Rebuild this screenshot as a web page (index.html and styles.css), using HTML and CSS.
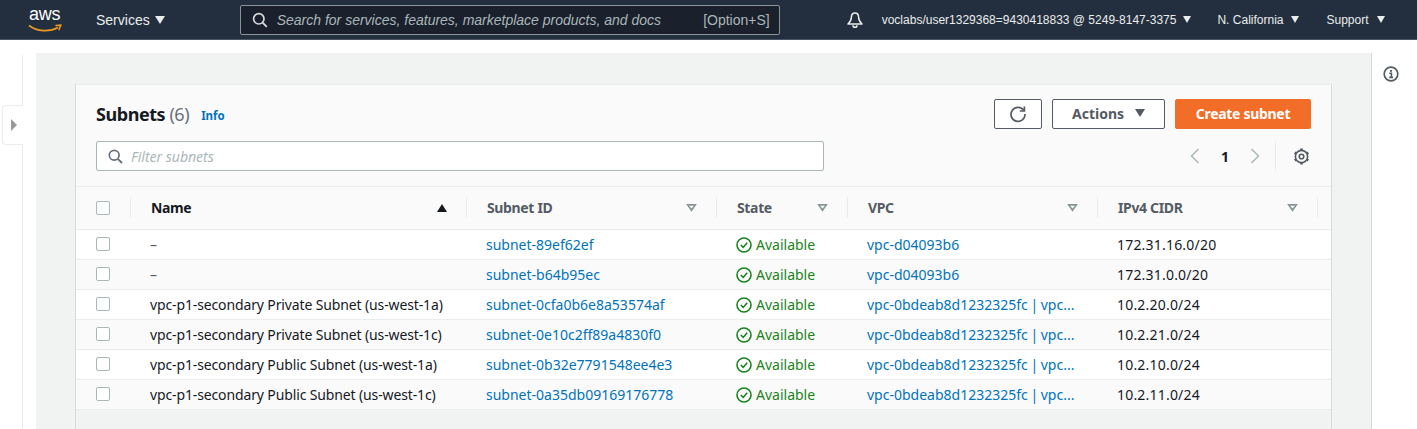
FILE: index.html
```html
<!DOCTYPE html>
<html lang="en">
<head>
    <meta charset="UTF-8">
    <title>Subnets | VPC Management Console</title>
    <link rel="stylesheet" href="styles.css">
</head>
<body>

    <!-- Top navigation -->
    <nav class="topnav">
        <a class="logo">
            <span class="logo-text">aws</span>
            <svg class="logo-smile" width="34" height="9" viewBox="0 0 34 9">
                <path d="M1 1.5C9 7.5 21 8.5 30 3.5" fill="none" stroke="#ec9a1f" stroke-width="1.7"/>
                <path d="M27.5 1.6L32.8 1.2L30.8 6.2" fill="none" stroke="#ec9a1f" stroke-width="1.5"/>
            </svg>
        </a>
        <span class="nav-item services">Services <i class="caret"></i></span>
        <div class="nav-search">
            <svg width="16" height="16" viewBox="0 0 16 16" class="nav-search-icon">
                <circle cx="6.8" cy="6.8" r="5.2" fill="none" stroke="#d5dbdb" stroke-width="1.7"/>
                <path d="M10.6 10.6L14.8 14.8" stroke="#d5dbdb" stroke-width="1.9"/>
            </svg>
            <span class="nav-search-text">Search for services, features, marketplace products, and docs</span>
            <span class="nav-search-key">[Option+S]</span>
        </div>
        <svg class="bell" width="18" height="18" viewBox="0 0 18 18">
            <path d="M9 2C6.4 2 5.4 4 5.4 6.3C5.4 9 4.2 11 2 13H16C13.8 11 12.6 9 12.6 6.3C12.6 4 11.6 2 9 2Z" fill="none" stroke="#eaeded" stroke-width="1.5" stroke-linejoin="round"/>
            <path d="M7 14.2C7 17 11 17 11 14.2" fill="none" stroke="#eaeded" stroke-width="1.5"/>
        </svg>
        <span class="nav-item account">voclabs/user1329368=9430418833 @ 5249-8147-3375 <i class="caret small"></i></span>
        <span class="nav-item region">N. California <i class="caret small"></i></span>
        <span class="nav-item support">Support <i class="caret small"></i></span>
    </nav>

    <div class="layout">
        <!-- Left collapsed navigation -->
        <aside class="side-left">
            <div class="side-tab"><i class="side-arrow"></i></div>
        </aside>

        <main class="content">
            <section class="card">
                <header class="card-head">
                    <div class="head-row">
                        <h1>Subnets <span class="count">(6)</span></h1>
                        <a class="info">Info</a>
                        <div class="actions">
                            <button class="btn btn-icon">
                                <svg width="18" height="18" viewBox="0 0 18 18">
                                    <path d="M14.6 5.2A7 7 0 1 0 16 9" fill="none" stroke="#545b64" stroke-width="1.7"/>
                                    <path d="M15.4 1.4V6H10.8" fill="none" stroke="#545b64" stroke-width="1.7"/>
                                </svg>
                            </button>
                            <button class="btn btn-actions"><span>Actions</span> <i class="caret dark"></i></button>
                            <button class="btn btn-primary"><span>Create subnet</span></button>
                        </div>
                    </div>
                    <div class="filter-row">
                        <div class="filter">
                            <svg width="15" height="15" viewBox="0 0 15 15">
                                <circle cx="6.2" cy="6.2" r="4.9" fill="none" stroke="#687078" stroke-width="1.7"/>
                                <path d="M9.8 9.8L14 14" stroke="#687078" stroke-width="1.9"/>
                            </svg>
                            <span>Filter subnets</span>
                        </div>
                        <div class="pager">
                            <svg width="10" height="16" viewBox="0 0 10 16"><path d="M8.5 1L1.5 8L8.5 15" fill="none" stroke="#aab7b8" stroke-width="1.5"/></svg>
                            <span class="page-num">1</span>
                            <svg width="10" height="16" viewBox="0 0 10 16"><path d="M1.5 1L8.5 8L1.5 15" fill="none" stroke="#aab7b8" stroke-width="1.5"/></svg>
                            <span class="pager-sep"></span>
                            <svg class="gear" width="17" height="17" viewBox="0 0 17 17">
                                <circle cx="8.5" cy="8.5" r="6.1" fill="none" stroke="#545b64" stroke-width="1.6"/>
                                <circle cx="8.5" cy="8.5" r="2.3" fill="none" stroke="#545b64" stroke-width="1.6"/>
                                <path d="M8.5 0.6V2.4M8.5 14.6V16.4M1.7 4.6L3.2 5.5M13.8 11.5L15.3 12.4M1.7 12.4L3.2 11.5M13.8 5.5L15.3 4.6" stroke="#545b64" stroke-width="2.6"/>
                            </svg>
                        </div>
                    </div>
                </header>

                <table class="subnets">
                    <thead>
                        <tr>
                            <th class="col-check"><div class="th-check"><span class="checkbox"></span></div></th>
                            <th class="col-name"><div class="th-in sorted"><span>Name</span> <i class="sort-up"></i></div></th>
                            <th class="col-id"><div class="th-in"><span>Subnet ID</span> <i class="sort-down"></i></div></th>
                            <th class="col-state"><div class="th-in"><span>State</span> <i class="sort-down"></i></div></th>
                            <th class="col-vpc"><div class="th-in"><span>VPC</span> <i class="sort-down"></i></div></th>
                            <th class="col-cidr"><div class="th-in last"><span>IPv4 CIDR</span> <i class="sort-down"></i></div></th>
                            <th class="col-rest"></th>
                        </tr>
                    </thead>
                    <tbody id="rows">
                        <tr>
                            <td><span class="checkbox"></span></td>
                            <td class="dash">–</td>
                            <td><a>subnet-89ef62ef</a></td>
                            <td class="ok"><svg width="16" height="16" viewBox="0 0 16 16"><circle cx="8" cy="8" r="7" fill="none" stroke="#1a8320" stroke-width="1.6"/><path d="M4.8 8L7.2 10.4L11.2 5.8" fill="none" stroke="#1a8320" stroke-width="1.6"/></svg>Available</td>
                            <td><a>vpc-d04093b6</a></td>
                            <td class="cidr">172.31.16.0/20</td>
                            <td></td>
                        </tr>
                        <tr>
                            <td><span class="checkbox"></span></td>
                            <td class="dash">–</td>
                            <td><a>subnet-b64b95ec</a></td>
                            <td class="ok"><svg width="16" height="16" viewBox="0 0 16 16"><circle cx="8" cy="8" r="7" fill="none" stroke="#1a8320" stroke-width="1.6"/><path d="M4.8 8L7.2 10.4L11.2 5.8" fill="none" stroke="#1a8320" stroke-width="1.6"/></svg>Available</td>
                            <td><a>vpc-d04093b6</a></td>
                            <td class="cidr">172.31.0.0/20</td>
                            <td></td>
                        </tr>
                        <tr>
                            <td><span class="checkbox"></span></td>
                            <td class="name">vpc-p1-secondary Private Subnet (us-west-1a)</td>
                            <td><a>subnet-0cfa0b6e8a53574af</a></td>
                            <td class="ok"><svg width="16" height="16" viewBox="0 0 16 16"><circle cx="8" cy="8" r="7" fill="none" stroke="#1a8320" stroke-width="1.6"/><path d="M4.8 8L7.2 10.4L11.2 5.8" fill="none" stroke="#1a8320" stroke-width="1.6"/></svg>Available</td>
                            <td class="vpc"><a>vpc-0bdeab8d1232325fc | vpc...</a></td>
                            <td class="cidr">10.2.20.0/24</td>
                            <td></td>
                        </tr>
                        <tr>
                            <td><span class="checkbox"></span></td>
                            <td class="name">vpc-p1-secondary Private Subnet (us-west-1c)</td>
                            <td><a>subnet-0e10c2ff89a4830f0</a></td>
                            <td class="ok"><svg width="16" height="16" viewBox="0 0 16 16"><circle cx="8" cy="8" r="7" fill="none" stroke="#1a8320" stroke-width="1.6"/><path d="M4.8 8L7.2 10.4L11.2 5.8" fill="none" stroke="#1a8320" stroke-width="1.6"/></svg>Available</td>
                            <td class="vpc"><a>vpc-0bdeab8d1232325fc | vpc...</a></td>
                            <td class="cidr">10.2.21.0/24</td>
                            <td></td>
                        </tr>
                        <tr>
                            <td><span class="checkbox"></span></td>
                            <td class="name">vpc-p1-secondary Public Subnet (us-west-1a)</td>
                            <td><a>subnet-0b32e7791548ee4e3</a></td>
                            <td class="ok"><svg width="16" height="16" viewBox="0 0 16 16"><circle cx="8" cy="8" r="7" fill="none" stroke="#1a8320" stroke-width="1.6"/><path d="M4.8 8L7.2 10.4L11.2 5.8" fill="none" stroke="#1a8320" stroke-width="1.6"/></svg>Available</td>
                            <td class="vpc"><a>vpc-0bdeab8d1232325fc | vpc...</a></td>
                            <td class="cidr">10.2.10.0/24</td>
                            <td></td>
                        </tr>
                        <tr>
                            <td><span class="checkbox"></span></td>
                            <td class="name">vpc-p1-secondary Public Subnet (us-west-1c)</td>
                            <td><a>subnet-0a35db09169176778</a></td>
                            <td class="ok"><svg width="16" height="16" viewBox="0 0 16 16"><circle cx="8" cy="8" r="7" fill="none" stroke="#1a8320" stroke-width="1.6"/><path d="M4.8 8L7.2 10.4L11.2 5.8" fill="none" stroke="#1a8320" stroke-width="1.6"/></svg>Available</td>
                            <td class="vpc"><a>vpc-0bdeab8d1232325fc | vpc...</a></td>
                            <td class="cidr">10.2.11.0/24</td>
                            <td></td>
                        </tr>
                    </tbody>
                </table>
            </section>
        </main>

        <!-- Right help rail -->
        <aside class="side-right">
            <svg width="16" height="16" viewBox="0 0 16 16">
                <circle cx="8" cy="8" r="6.8" fill="none" stroke="#545b64" stroke-width="1.7"/>
                <circle cx="8" cy="4.9" r="1.1" fill="#545b64"/>
                <path d="M6.3 7.3H8.4V11.2M6.2 11.4H10" fill="none" stroke="#545b64" stroke-width="1.6"/>
            </svg>
        </aside>
    </div>

</body>
</html>
```

FILE: styles.css
```css
* {
    box-sizing: border-box;
}

html,
body {
    height: 429px;
    overflow: hidden;
}

body {
    font-family: "Noto Sans", "Open Sans", sans-serif;
    font-size: 14px;
    margin: 0;
    color: #16191f;
    background-color: white;
}

/* top nav */
.topnav {
    display: flex;
    align-items: center;
    height: 40px;
    background-color: #232f3e;
    border-bottom: 1px solid #4a5562;
    font-family: "Liberation Sans", Arial, sans-serif;
    color: #eaeded;
}

.logo {
    position: relative;
    width: 34px;
    height: 30px;
    margin-left: 28px;
}

.logo-text {
    display: block;
    font-size: 18px;
    line-height: 18px;
    letter-spacing: -0.2px;
    color: white;
    margin-left: 1px;
}

.logo-smile {
    position: absolute;
    left: 0;
    top: 19px;
}

.nav-item {
    display: flex;
    align-items: center;
    white-space: nowrap;
}

.services {
    font-size: 14px;
    margin-left: 34px;
    gap: 5px;
}

.caret {
    display: inline-block;
    width: 0;
    height: 0;
    border-left: 5.5px solid transparent;
    border-right: 5.5px solid transparent;
    border-top: 8px solid #eaeded;
}

.caret.small {
    border-left-width: 4.5px;
    border-right-width: 4.5px;
    border-top-width: 7px;
}

.caret.dark {
    border-top-color: #545b64;
    border-left-width: 5.5px;
    border-right-width: 5.5px;
    border-top-width: 8px;
}

.nav-search {
    display: flex;
    align-items: center;
    width: 540px;
    height: 30px;
    margin-left: 75px;
    padding: 0 9px 0 11px;
    background-color: #1a202c;
    border: 1px solid #879596;
    border-radius: 2px;
    font-size: 14px;
    color: #aab7b8;
}

.nav-search-text {
    font-style: italic;
    margin-left: 9px;
    flex: 1;
    white-space: nowrap;
}

.bell {
    margin-left: 66px;
}

.account {
    font-size: 12px;
    gap: 7px;
    margin-left: 18px;
}

.region {
    font-size: 12px;
    gap: 8px;
    margin-left: 26px;
}

.support {
    font-size: 12px;
    gap: 8px;
    margin-left: 27px;
}

/* page */
.layout {
    display: flex;
    height: 389px;
    padding-top: 13px;
}

.side-left {
    position: relative;
    width: 23px;
    flex-shrink: 0;
    border-right: 1px solid #eaeded;
    margin-top: 2px;
}

.side-tab {
    position: absolute;
    left: 2px;
    top: 50px;
    width: 21px;
    height: 40px;
    background-color: white;
    border: 1px solid #eaeded;
    border-right: none;
    border-radius: 4px 0 0 4px;
    display: flex;
    align-items: center;
    padding-left: 8px;
}

.side-arrow {
    display: block;
    width: 0;
    height: 0;
    border-top: 6px solid transparent;
    border-bottom: 6px solid transparent;
    border-left: 6px solid #999;
}

.content {
    width: 1336px;
    margin-left: 13px;
    padding: 31px 39px 0 39px;
    background-color: #f1f3f2;
    border-right: 1px solid #d5dbdb;
    flex-shrink: 0;
}

.side-right {
    flex: 1;
    padding: 13px 0 0 11px;
}

/* card */
.card {
    width: 1257px;
    height: 100%;
    border-top: 1px solid #eaeded;
    border-left: 1px solid #d5dbdb;
    border-right: 1px solid #d5dbdb;
}

.card-head {
    height: 102px;
    padding: 14px 20px 0 20px;
    background-color: #fafafa;
    border-bottom: 1px solid #eaeded;
}

.head-row {
    display: flex;
    align-items: center;
    height: 30px;
}

h1 {
    font-size: 18px;
    font-weight: 700;
    line-height: 30px;
    letter-spacing: -0.45px;
    margin: 0;
}

.count {
    font-weight: 400;
    color: #687078;
}

.info {
    font-size: 11.5px;
    font-weight: 700;
    color: #0073bb;
    margin: 3px 0 0 12px;
}

.actions {
    display: flex;
    gap: 10px;
    margin-left: auto;
}

.btn {
    height: 30px;
    padding: 0 0 2px;
    border: 1px solid #545b64;
    border-radius: 2px;
    background-color: white;
    color: #545b64;
    font-family: inherit;
    font-size: 14px;
    font-weight: 700;
    display: flex;
    align-items: center;
    justify-content: center;
}

.btn-icon {
    width: 48px;
    padding: 0;
}

.btn-actions {
    width: 113px;
    gap: 11px;
}

.btn-primary {
    width: 136px;
    background-color: #f26e28;
    border-color: #f26e28;
    color: white;
    letter-spacing: -0.3px;
}

.filter-row {
    display: flex;
    align-items: center;
    justify-content: space-between;
    margin-top: 12px;
}

.filter {
    display: flex;
    align-items: center;
    gap: 8px;
    width: 728px;
    height: 30px;
    padding-left: 11px;
    background-color: white;
    border: 1px solid #aab7b8;
    border-radius: 2px;
    color: #aab7b8;
    font-style: italic;
}

.pager {
    display: flex;
    align-items: center;
    height: 30px;
    padding-right: 1px;
}

.page-num {
    font-weight: 700;
    width: 50px;
    text-align: center;
}

.pager-sep {
    width: 1px;
    height: 30px;
    background-color: #eaeded;
    margin: 0 17px 0 15px;
}

/* table */
.subnets {
    width: 100%;
    border-collapse: collapse;
    table-layout: fixed;
}

.subnets thead tr {
    background-color: #fafafa;
}

.subnets th {
    height: 42px;
    padding: 0;
    text-align: left;
    font-weight: 700;
    color: #545b64;
    letter-spacing: -0.35px;
    border-bottom: 1px solid #eaeded;
}

.col-check { width: 55px; }
.col-name { width: 336px; }
.col-id { width: 250px; }
.col-state { width: 131px; }
.col-vpc { width: 250px; }
.col-cidr { width: 220px; }

.th-check {
    display: flex;
    align-items: center;
    height: 21px;
    padding-left: 20px;
    border-right: 1px solid #eaeded;
}

.th-in {
    display: flex;
    align-items: center;
    justify-content: space-between;
    height: 21px;
    padding: 0 19px 0 20px;
    border-right: 1px solid #eaeded;
}

.th-in.sorted {
    color: #16191f;
}

.sort-up {
    width: 0;
    height: 0;
    border-left: 5.5px solid transparent;
    border-right: 5.5px solid transparent;
    border-bottom: 8px solid #16191f;
}

.sort-down {
    width: 11px;
    height: 8px;
    background-color: #879596;
    clip-path: polygon(0 0, 100% 0, 50% 100%, 0 0, 28% 26%, 50% 58%, 72% 26%, 28% 26%);
}

.checkbox {
    display: block;
    width: 14px;
    height: 14px;
    background-color: white;
    border: 1px solid #aab7b8;
    border-radius: 2px;
}

.subnets td {
    height: 30px;
    padding: 0 0 0 19px;
    white-space: nowrap;
    overflow: hidden;
    color: #16191f;
    border-bottom: 1px solid #eaeded;
}

.subnets td:first-child {
    padding-left: 20px;
}

.subnets tbody tr {
    background-color: white;
}

.subnets tbody tr:nth-child(even) {
    background-color: #fafafa;
}

.subnets td a {
    color: #0073bb;
}

.subnets td.dash {
    color: #545b64;
}

.subnets td.name {
    letter-spacing: -0.13px;
}

.subnets td.vpc {
    word-spacing: -1px;
}

.subnets td.ok {
    color: #1a8320;
}

.subnets td.cidr {
    letter-spacing: 0.2px;
}

.ok svg {
    vertical-align: -3px;
    margin-right: 4px;
}
```
